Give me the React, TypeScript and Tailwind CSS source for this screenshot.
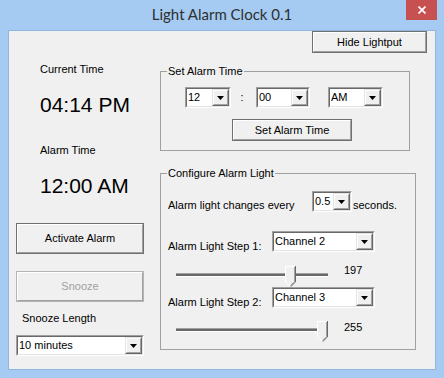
import React from "react";

const ui = "font-['Liberation_Sans',Arial,sans-serif] text-[11px] leading-[13px] text-black";

const Arrow = () => (
  <svg width="7" height="4" viewBox="0 0 7 4">
    <polygon points="0,0 7,0 3.5,4" fill="#000" />
  </svg>
);

const Combo = ({ value, className = "" }: { value: string; className?: string }) => (
  <div
    className={`flex border border-t-[#a0a0a0] border-l-[#a0a0a0] border-b-white border-r-white ${className}`}
  >
    <div className="flex flex-1 items-center border border-t-[#696969] border-l-[#696969] border-b-[#e3e3e3] border-r-[#e3e3e3] bg-white">
      <span className="flex-1 truncate pl-[1px]">{value}</span>
      <div className="flex h-full w-[17px] border border-t-[#e3e3e3] border-l-[#e3e3e3] border-b-[#696969] border-r-[#696969]">
        <div className="flex flex-1 items-center justify-center border border-t-white border-l-white border-b-[#a0a0a0] border-r-[#a0a0a0] bg-[#f0f0f0]">
          <Arrow />
        </div>
      </div>
    </div>
  </div>
);

const Btn = ({
  children,
  className = "",
  disabled = false,
}: {
  children: React.ReactNode;
  className?: string;
  disabled?: boolean;
}) => (
  <button
    disabled={disabled}
    className={`flex border ${disabled ? "border-[#b4b4b4] text-[#a0a0a0]" : "border-[#707070]"} ${className}`}
  >
    <span className="flex flex-1 items-center justify-center border border-t-white border-l-white border-b-[#a0a0a0] border-r-[#a0a0a0] bg-[#f0f0f0]">
      {children}
    </span>
  </button>
);

const Slider = ({ value }: { value: number }) => {
  // thumb travels over track width minus thumb width
  const left = Math.round((value / 255) * 141);
  return (
    <div className="relative h-[21px] w-[152px]">
      <div className="mt-[7px] h-[4px] border-t border-b border-t-[#a0a0a0] border-b-white bg-[#696969]" />
      <svg width="11" height="21" viewBox="0 0 11 21" className="absolute top-0" style={{ left }}>
        <path d="M0 0H11V16L5.5 21L0 16Z" fill="#f0f0f0" />
        <path d="M0.5 16V0.5H10" stroke="#fff" fill="none" />
        <path d="M0.5 16L5 20.3" stroke="#fff" fill="none" />
        <path d="M10.5 0V16L5.5 20.8" stroke="#696969" fill="none" />
        <path d="M9.5 1V15.6L5.5 19.4" stroke="#a0a0a0" fill="none" />
      </svg>
    </div>
  );
};

export default function App() {
  return (
    <div className="flex h-[378px] w-[444px] flex-col bg-[#a5cbf2] px-[8px] pb-[8px]">
      <div className="relative flex h-[30px] items-center justify-center">
        <span className="-mt-[1px] font-['Lato',sans-serif] text-[15px] text-[#2f2f2f]">
          Light Alarm Clock 0.1
        </span>
        <div className="absolute right-[-1px] top-0 flex h-[20px] w-[31px] items-center justify-center bg-[#c75050]">
          <svg width="8" height="8" viewBox="0 0 8 8">
            <path d="M0.5 0.5L7.5 7.5M7.5 0.5L0.5 7.5" stroke="#fff" strokeWidth="1.7" />
          </svg>
        </div>
      </div>

      <div className={`flex flex-1 flex-col border border-[#90b6de] bg-[#f0f0f0] ${ui}`}>
        <div className="flex justify-end pr-[8px]">
          <Btn className="h-[22px] w-[115px]">Hide Lightput</Btn>
        </div>

        <div className="flex">
          <div className="flex w-[151px] flex-col">
            <div className="ml-[31px] mt-[10px]">Current Time</div>
            <div className="ml-[31px] mt-[17px] text-[21px] leading-[24px]">04:14 PM</div>
            <div className="ml-[31px] mt-[27px]">Alarm Time</div>
            <div className="ml-[31px] mt-[17px] text-[21px] leading-[24px]">12:00 AM</div>
            <Btn className="ml-[7px] mt-[25px] h-[31px] w-[128px]">Activate Alarm</Btn>
            <Btn disabled className="ml-[7px] mt-[17px] h-[31px] w-[128px]">
              Snooze
            </Btn>
            <div className="ml-[13px] mt-[10px]">Snooze Length</div>
            <Combo value="10 minutes" className="ml-[7px] mt-[10px] h-[21px] w-[128px]" />
          </div>

          <div className="flex flex-col">
            <fieldset className="mt-[12px] w-[250px] border border-[#a0a0a0] pb-[9px]">
              <legend className="ml-[6px] px-[1px]">Set Alarm Time</legend>
              <div className="ml-[24px] mt-[9px] flex items-center">
                <Combo value="12" className="h-[21px] w-[46px]" />
                <span className="w-[25px] pr-[3px] text-center">:</span>
                <Combo value="00" className="h-[21px] w-[54px]" />
                <Combo value="AM" className="ml-[18px] h-[21px] w-[55px]" />
              </div>
              <Btn className="ml-[71px] mt-[11px] h-[22px] w-[120px]">Set Alarm Time</Btn>
            </fieldset>

            <fieldset className="mt-[16px] w-[256px] border border-[#a0a0a0] pb-[7px]">
              <legend className="ml-[6px] px-[1px]">Configure Alarm Light</legend>
              <div className="ml-[7px] mt-[11px] flex items-end">
                <span className="w-[144px]">Alarm light changes every</span>
                <Combo value="0.5" className="h-[21px] w-[40px]" />
                <span className="ml-[1px]">seconds.</span>
              </div>
              <div className="ml-[7px] mt-[19px] flex items-end">
                <span className="-mb-[1px] w-[104px]">Alarm Light Step 1:</span>
                <Combo value="Channel 2" className="h-[21px] w-[103px]" />
              </div>
              <div className="ml-[15px] mt-[14px] flex">
                <Slider value={197} />
                <span className="-mt-[2px] ml-[16px]">197</span>
              </div>
              <div className="ml-[7px] flex items-end">
                <span className="-mb-[1px] w-[104px]">Alarm Light Step 2:</span>
                <Combo value="Channel 3" className="h-[21px] w-[103px]" />
              </div>
              <div className="ml-[15px] mt-[13px] flex">
                <Slider value={255} />
                <span className="ml-[16px]">255</span>
              </div>
            </fieldset>
          </div>
        </div>
      </div>
    </div>
  );
}
